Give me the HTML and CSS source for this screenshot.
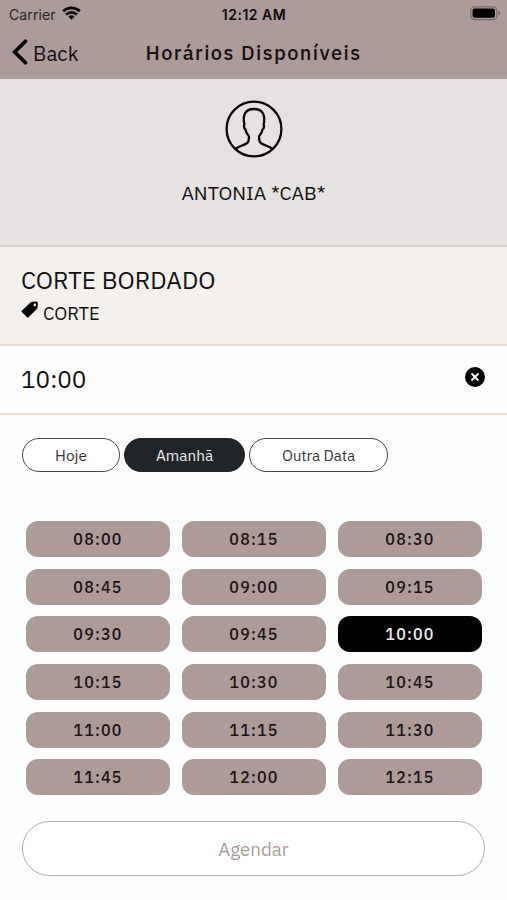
FILE: index.html
```html
<!DOCTYPE html>
<html lang="pt-BR">
<head>
<meta charset="utf-8">
<meta name="viewport" content="width=device-width, initial-scale=1">
<title>Horários Disponíveis</title>
<link rel="stylesheet" href="styles.css">
</head>
<body>
<header class="top">
  <div class="status">
    <div class="carrier"><span>Carrier</span>
      <svg class="wifi" width="19" height="14" viewBox="0 0 19 14" fill="none" stroke="#0c0909" stroke-width="2.7"><path d="M1.200 5.200C5.900.7 13.100.7 17.800 5.200M4 8.600c3.100-3 7.900-3 11 0"/><path d="M9.500 13.700 6.400 10.600c1.800-1.700 4.400-1.700 6.200 0Z" fill="#0c0909" stroke="none"/></svg>
    </div>
    <div class="clock">12:12 AM</div>
    <svg class="battery" width="31" height="15" viewBox="0 0 31 15"><rect x=".8" y=".8" width="26" height="12.800" rx="3.800" fill="none" stroke="#766b6a" stroke-width="1.200"/><rect x="2.600" y="2.600" width="22.400" height="9.200" rx="2" fill="#000"/><path d="M28.300 4.800c2.600 1 2.600 3.800 0 4.800Z" fill="#766b6a"/></svg>
  </div>
  <nav class="bar">
    <a class="back"><svg width="16" height="26" viewBox="0 0 16 26" fill="none" stroke="#000" stroke-width="3.700" stroke-linecap="round"><path d="M13.500 2.200 2.700 13l10.800 10.800"/></svg><span>Back</span></a>
    <h1>Horários Disponíveis</h1>
  </nav>
</header>
<section class="profile">
  <svg width="58" height="58" viewBox="0 0 58 58" fill="none" stroke="#080808" stroke-width="2.300" stroke-linejoin="round"><circle cx="29" cy="29" r="27.400"/><path d="M10.500 48.800c3-2.400 8.200-3.600 11-5.300 2-1.200 2.800-3 2.300-7.500-1.800-1.800-3-3.800-3.400-6.700-1.400-.5-1.700-3.500-1-4.700-2-9 .3-15.600 9.600-15.600s11.600 6.600 9.600 15.600c.7 1.200.4 4.200-1 4.700-.4 2.900-1.600 4.900-3.400 6.700-.5 4.500.3 6.300 2.300 7.500 2.800 1.700 8 2.900 11 5.300"/></svg>
  <p>ANTONIA *CAB*</p>
</section>
<section class="service">
  <h2>CORTE BORDADO</h2>
  <div class="category"><svg width="18" height="18" viewBox="0 0 18 18"><path fill="#000" fill-rule="evenodd" d="M1 9.500 9.200 1.800Q10.200.9 11.500.8L15.200.5Q17 .5 16.900 2.300L16.600 6Q16.500 7.300 15.600 8.200L7.800 16Q6.800 17 5.800 16L1 11.300Q.1 10.400 1 9.500ZM13.800 2.600a1.300 1.300 0 1 0 0 2.600 1.300 1.300 0 0 0 0-2.600Z"/></svg><span>CORTE</span></div>
</section>
<section class="chosen">
  <span>10:00</span>
  <svg width="20" height="20" viewBox="0 0 20 20"><circle cx="10" cy="10" r="10"/><path d="m6.500 6.500 7 7m0-7-7 7" stroke="#fff" stroke-width="1.800"/></svg>
</section>
<main>
  <div class="days"><button class="today">Hoje</button><button class="tomorrow">Amanhã</button><button class="other">Outra Data</button></div>
  <div class="slots">
    <button>08:00</button><button>08:15</button><button>08:30</button>
    <button>08:45</button><button>09:00</button><button>09:15</button>
    <button>09:30</button><button>09:45</button><button class="selected">10:00</button>
    <button>10:15</button><button>10:30</button><button>10:45</button>
    <button>11:00</button><button>11:15</button><button>11:30</button>
    <button>11:45</button><button>12:00</button><button>12:15</button>
  </div>
  <button class="submit">Agendar</button>
</main>
</body>
</html>
```
FILE: styles.css
```css
* { box-sizing: border-box; }
body { margin: 0; height: 900px; overflow: hidden; background: #fefefe; color: #111; font-family: "IBM Plex Sans", Roboto, sans-serif; }
h1, h2, p { margin: 0; font-weight: 400; }
button { margin: 0; padding: 0; border: 0; font-family: inherit; }
svg { display: block; flex: none; }
.top { height: 79px; background: #ac9b99; }
.status { height: 28px; display: grid; grid-template-columns: 1fr auto 1fr; align-items: center; padding: 0 6px 0 9px; font-family: Inter, sans-serif; font-size: 14px; color: #0c0909; }
.carrier { display: flex; align-items: center; gap: 6px; color: #2a2424; letter-spacing: 0.1px; }
.wifi { margin-top: -2px; }
.clock { font-weight: 600; letter-spacing: 0.5px; margin-left: -2px; }
.battery { justify-self: end; margin-top: -1px; }
.bar { height: 50px; display: grid; grid-template-columns: 1fr auto 1fr; align-items: center; padding: 0 12px; }
.back { display: flex; align-items: center; gap: 5px; font-size: 20.500px; color: #161010; }
.back svg { margin-top: -3px; }
h1 { margin-top: -2px; font-size: 20px; font-weight: 500; letter-spacing: 1.400px; color: #161010; }
.profile { height: 168px; padding-top: 21px; background: #e6e2e1; border-bottom: 2px solid #dccfc9; display: flex; flex-direction: column; align-items: center; }
.profile p { margin-top: 23px; font-size: 19.500px; line-height: 24px; }
.service { height: 99px; padding: 18px 21px 0; background: #f4f0ee; border-bottom: 2px solid #ebd9cf; }
h2 { font-size: 24.300px; line-height: 30px; }
.category { display: flex; gap: 4px; height: 24px; margin-top: 6px; font-size: 18.400px; line-height: 24px; }
.chosen { height: 69px; padding: 0 22px 0 21px; border-bottom: 2px solid #ebdcd5; display: flex; align-items: center; justify-content: space-between; font-size: 24.300px; }
.chosen span { margin-top: -1px; }
.chosen svg { margin-top: -5px; }
main { padding: 23px 22px 0; }
.days { display: flex; gap: 4px; }
.days button { height: 34px; border: 1.500px solid #45484b; border-radius: 17px; background: #fff; color: #343638; font-size: 15.400px; }
.days .today { width: 98px; }
.days .tomorrow { width: 121px; background: #212429; border-color: #212429; color: #eee; }
.days .other { width: 139px; letter-spacing: -0.15px; }
.slots { display: grid; grid-template-columns: repeat(3, 144px); column-gap: 12px; row-gap: 11.700px; margin: 49px 0 0 4px; }
.slots button { height: 36px; border-radius: 12px; background: #ac9b99; color: #1c1212; font-size: 16px; font-weight: 500; line-height: 36px; letter-spacing: 1.200px; }
.slots .selected { background: #000; color: #eee; }
.submit { display: block; width: 463px; height: 55px; margin-top: 26px; border: 1.500px solid #b4adab; border-radius: 28px; background: #fff; color: #ac9b99; font-size: 18.700px; }
```
